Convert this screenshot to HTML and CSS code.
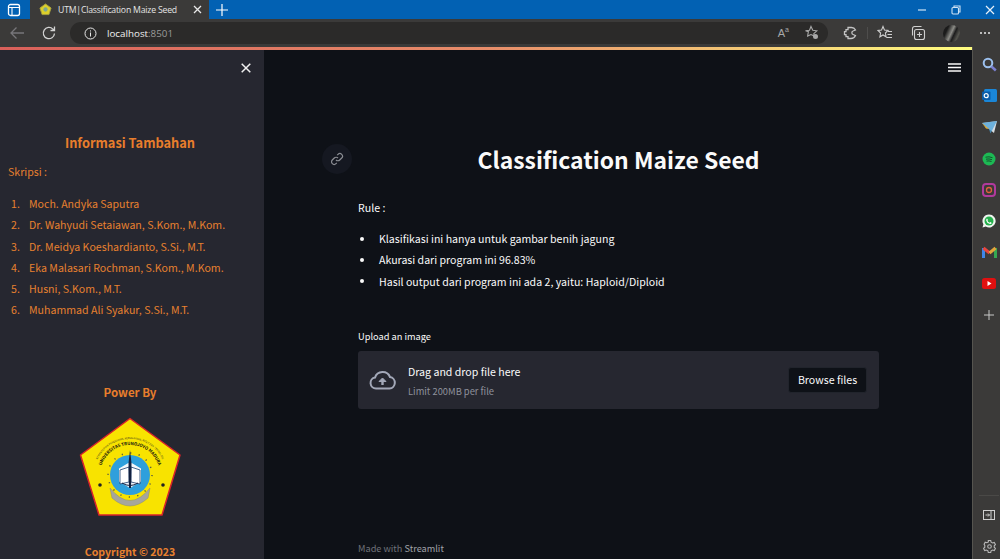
FILE: index.html
```html
<!DOCTYPE html>
<html lang="en">
<head>
  <meta charset="UTF-8" />
  <title>UTM|Classification Maize Seed</title>
  <link rel="stylesheet" href="styles.css">
</head>
<body>

<div class="titlebar">
  <div class="tab-actions">
    <svg width="14" height="14" viewBox="0 0 14 14" fill="none" stroke="#fff" stroke-width="1.3"><rect x="1.5" y="1.5" width="11" height="11" rx="2"/><path d="M1.5 4.5h11M5 4.5v8" stroke-width="1.1"/></svg>
  </div>
  <div class="tab">
    <svg class="tab-icon" width="13" height="13" viewBox="0 0 14 14"><path d="M7 1l6 4.4-2.3 7.1H3.3L1 5.4z" fill="#dcd02a" stroke="#a8a040"/><circle cx="7" cy="7" r="2.3" fill="#7fa890"/></svg>
    <span class="tab-title">UTM|Classification Maize Seed</span>
    <svg width="9" height="9" viewBox="0 0 9 9" stroke="#e8e8e8" stroke-width="1.3"><path d="M1 1l7 7M8 1L1 8"/></svg>
  </div>
  <svg class="new-tab" width="12" height="12" viewBox="0 0 12 12" stroke="#fff" stroke-width="1.2"><path d="M6 0v12M0 6h12"/></svg>
  <div class="window-btns">
    <svg width="10" height="10" viewBox="0 0 10 10" stroke="#cfe3f5" stroke-width="1.2"><path d="M1 5h8"/></svg>
    <svg width="10" height="10" viewBox="0 0 10 10" fill="none" stroke="#cfe3f5" stroke-width="1.1"><rect x="1" y="2.5" width="6.5" height="6.5" rx="1"/><path d="M3 2.5V1h6v6H7.5"/></svg>
    <svg width="10" height="10" viewBox="0 0 10 10" stroke="#e6f0fa" stroke-width="1.2"><path d="M1 1l8 8M9 1L1 9"/></svg>
  </div>
</div>

<div class="toolbar">
  <svg class="nav-icon" width="16" height="14" viewBox="0 0 16 14" fill="none" stroke="#77767a" stroke-width="1.3"><path d="M15 7H2M7.5 1.5L2 7l5.5 5.5"/></svg>
  <svg class="nav-icon" width="16" height="16" viewBox="0 0 16 16" fill="none" stroke="#d4d4d4" stroke-width="1.3"><path d="M13.5 8.5a5.6 5.6 0 1 1-1.6-4.4L13.5 5.5M13.5 1.5v4h-4"/></svg>
  <div class="address">
    <svg width="13" height="13" viewBox="0 0 13 13" fill="none" stroke="#e8e8e8" stroke-width="1"><circle cx="6.5" cy="6.5" r="5.5"/><path d="M6.5 5.5v4M6.5 3.4v1.1"/></svg>
    <span class="url">localhost<span class="url-port">:8501</span></span>
    <span class="address-end">
      <span class="read-aloud">A<sup>a</sup></span>
      <svg width="16" height="16" viewBox="0 0 16 16" fill="none" stroke="#a8a8a8" stroke-width="1.1"><path d="M7 1.5l1.800 3.800 4 .5-3 2.800.5 2.400-3.300-1.500L3.600 11l.8-4.400L1.500 5.800l4-.5z"/><circle cx="11.500" cy="11.500" r="2.500" fill="#a8a8a8" stroke="none"/></svg>
    </span>
  </div>
  <div class="toolbar-icons">
    <svg width="16" height="16" viewBox="0 0 16 16" fill="none" stroke="#c4c4c4" stroke-width="1.3"><path d="M6 2.500h3.500a4.500 4.500 0 0 1 4 2.500l-2.500 1c-1.500.5-1.500 3 0 3.500l2.500 1a5 5 0 0 1-4.500 3H6v-1.800H4v-2H2.500v-3H4v-2h2z"/></svg>
    <span class="toolbar-sep"></span>
    <svg width="16" height="16" viewBox="0 0 16 16" fill="none" stroke="#cfcfcf" stroke-width="1.100"><path d="M6 1.500l1.500 3.600 3.500.4-2.600 2.500.7 3.800L6 10l-3.100 1.800.7-3.800L1 5.500l3.500-.4zM11 6.500h4M10.500 9.500h4.500M9.500 12.500h5.500"/></svg>
    <svg width="16" height="16" viewBox="0 0 16 16" fill="none" stroke="#cfcfcf" stroke-width="1.100"><rect x="4.500" y="4.500" width="10" height="10" rx="2"/><path d="M9.500 7v5M7 9.500h5M2.500 10.500v-7a2 2 0 0 1 2-2h7"/></svg>
    <span class="avatar"></span>
    <span class="more">
      <span class="more-dot"></span><span class="more-dot"></span><span class="more-dot"></span>
    </span>
  </div>
</div>

<div class="page">
  <div class="app">
    <div class="decoration"></div>
    <div class="app-body">
      <aside class="sidebar">
        <div class="sidebar-close">
          <svg width="10" height="10" viewBox="0 0 10 10" stroke="#f0f0f0" stroke-width="1.500"><path d="M.7.7l8.600 8.600M9.300.7L.7 9.300"/></svg>
        </div>
        <h2 class="side-title">Informasi Tambahan</h2>
        <p class="side-text">Skripsi :</p>
        <ol class="side-list">
          <li>Moch. Andyka Saputra</li>
          <li>Dr. Wahyudi Setaiawan, S.Kom., M.Kom.</li>
          <li>Dr. Meidya Koeshardianto, S.Si., M.T.</li>
          <li>Eka Malasari Rochman, S.Kom., M.Kom.</li>
          <li>Husni, S.Kom., M.T.</li>
          <li>Muhammad Ali Syakur, S.Si., M.T.</li>
        </ol>
        <h3 class="side-sub">Power By</h3>
        <svg class="logo" width="102" height="102" viewBox="0 0 102 102">
          <defs>
            <path id="logo-arc-outer" d="M15 58a36 36 0 0 1 72 0"/>
            <path id="logo-arc-inner" d="M21 58a30 30 0 0 1 60 0"/>
          </defs>
          <path d="M51 1.500L101 38 83 98H20L1.500 38z" fill="#f8e300" stroke="#d8232a" stroke-width="1.500" stroke-linejoin="round"/>
          <text class="logo-small"><textPath href="#logo-arc-outer" startOffset="50%" text-anchor="middle">KEMENTERIAN PENDIDIKAN, KEBUDAYAAN, RISET DAN TEKNOLOGI</textPath></text>
          <text class="logo-name"><textPath href="#logo-arc-inner" startOffset="50%" text-anchor="middle">UNIVERSITAS TRUNOJOYO MADURA</textPath></text>
          <path d="M31 71q20 25 40 0l-2 10q-18 16-36 0z" fill="#a6a69c" stroke="#8c8c70" stroke-width=".5"/>
          <circle cx="51" cy="58" r="22" fill="none" stroke="#5c5c40" stroke-width="1.500" stroke-dasharray="1.200 7.400"/>
          <circle cx="51" cy="58" r="20" fill="#2f9fdc"/>
          <path d="M51 45l11 6.500v13L51 71l-11-6.500v-13z" fill="#f5f7fb"/>
          <path d="M41 53l9-3v15l-9 2zM61 53l-9-3v15l9 2z" fill="#fff" stroke="#1e3f6e" stroke-width=".8"/>
          <path d="M51 33l1.500 13-.5 25h-2l-.5-25z" fill="#122040"/>
          <path d="M43 66q8 5 16 0" fill="none" stroke="#122040" stroke-width="1"/>
          <circle cx="21" cy="68" r="1.800" fill="#222"/>
          <circle cx="84" cy="68" r="1.800" fill="#222"/>
        </svg>
        <p class="side-copy">Copyright © 2023</p>
      </aside>

      <main class="main">
        <div class="main-top">
          <svg width="13" height="9" viewBox="0 0 13 9" stroke="#fafafa" stroke-width="1.500"><path d="M0 1h13M0 4.500h13M0 8h13"/></svg>
        </div>
        <div class="block">
          <h1 class="title">
            <span class="title-link">
              <svg width="14" height="14" viewBox="0 0 14 14" fill="none" stroke="#8b8d93" stroke-width="1.200"><path d="M6 8a2.600 2.600 0 0 0 3.700 0l2-2A2.600 2.600 0 0 0 8 2.300l-.8.8M8 6a2.600 2.600 0 0 0-3.700 0l-2 2A2.600 2.600 0 0 0 6 11.700l.8-.8"/></svg>
            </span>
            Classification Maize Seed
          </h1>
          <p class="text">Rule :</p>
          <ul class="rule-list">
            <li>Klasifikasi ini hanya untuk gambar benih jagung</li>
            <li>Akurasi dari program ini 96.83%</li>
            <li>Hasil output dari program ini ada 2, yaitu: Haploid/Diploid</li>
          </ul>
          <label class="upload-label">Upload an image</label>
          <div class="dropzone">
            <svg class="cloud" width="27" height="20" viewBox="0 0 27 20" fill="none" stroke="#a3a8b8" stroke-width="2"><path d="M7 18.500a5.500 5.500 0 0 1-1-10.900A8 8 0 0 1 21 7a5.800 5.800 0 0 1-.5 11.500z"/><path d="M13.500 15V9.500" stroke-width="2.400"/><path d="M10 11.500l3.500-3.500 3.500 3.500z" fill="#a3a8b8" stroke-width="1"/></svg>
            <div class="drop-text">
              <span class="drop-main">Drag and drop file here</span>
              <small class="drop-limit">Limit 200MB per file</small>
            </div>
            <button class="browse-btn">Browse files</button>
          </div>
        </div>
        <footer class="footer">Made with <span class="footer-brand">Streamlit</span></footer>
      </main>
    </div>
  </div>

  <div class="rail">
    <div class="rail-apps">
      <svg width="15" height="15" viewBox="0 0 15 15" fill="none"><circle cx="6" cy="6" r="4.300" stroke="#9cc0ee" stroke-width="2"/><path d="M9.500 9.500l4.300 4" stroke="#7b7fd0" stroke-width="2.500"/></svg>
      <svg width="15" height="15" viewBox="0 0 15 15"><rect x="2" y="1" width="13" height="13" rx="1.500" fill="#1a86d8"/><rect x="0" y="3.500" width="8.500" height="8.500" rx="1" fill="#0a5ca8"/><circle cx="4.200" cy="7.700" r="2" fill="none" stroke="#fff" stroke-width="1.200"/></svg>
      <svg width="15" height="13" viewBox="0 0 15 13"><path d="M0 2l15-2-3 12-5-4z" fill="#d8dde2"/><path d="M0 2l7 6 1.500 4.500L15 0z" fill="#4aa0d8" opacity=".75"/><path d="M0 2l7 6-3-.5z" fill="#e2b23c"/></svg>
      <svg width="14" height="14" viewBox="0 0 14 14" fill="none"><circle cx="7" cy="7" r="6.500" fill="#1db954"/><path d="M3.500 5.200q3.500-1 7 .5M4 7.200q3-.8 6 .5M4.500 9.100q2.500-.6 5 .4" stroke="#14532d" stroke-width="1"/></svg>
      <svg width="14" height="14" viewBox="0 0 14 14" fill="none"><rect x="1" y="1" width="12" height="12" rx="3" stroke="#b13a9c" stroke-width="2"/><circle cx="7" cy="7" r="2.500" stroke="#e0603c" stroke-width="1.300"/></svg>
      <svg width="14" height="14" viewBox="0 0 14 14"><path d="M7 .500a6.500 6.500 0 0 0-5.600 9.800L.500 13.500l3.300-.9A6.500 6.500 0 1 0 7 .500z" fill="#f0f4f0"/><circle cx="7" cy="7" r="4.500" fill="#25b04c"/><path d="M5 4.500l1 1.500-.6.800q.8 1.400 2.200 2l.8-.7 1.400 1q-.8 1.300-2.400.7-2.600-1-3.200-3.400 0-1.400.8-1.900z" fill="#fff"/></svg>
      <svg width="15" height="12" viewBox="0 0 15 12" fill="none"><path d="M1.500 12V2" stroke="#3f86e8" stroke-width="3"/><path d="M13.500 12V2" stroke="#36a852" stroke-width="3"/><path d="M1.500 2l6 5" stroke="#e8453c" stroke-width="3"/><path d="M13.500 2l-6 5" stroke="#e2a53a" stroke-width="3"/></svg>
      <svg width="14" height="11" viewBox="0 0 14 11"><rect width="14" height="11" rx="2.500" fill="#e01010"/><path d="M5.500 3l4 2.500-4 2.500z" fill="#fff"/></svg>
      <svg width="10" height="10" viewBox="0 0 10 10" stroke="#c8c8c8" stroke-width="1"><path d="M5 0v10M0 5h10"/></svg>
    </div>
    <div class="rail-bottom">
      <span class="rail-sep"></span>
      <svg width="12" height="10" viewBox="0 0 12 10" fill="none" stroke="#cfcfcf"><rect x=".5" y=".5" width="11" height="9"/><path d="M8 .5v9M2.500 5h4M5 3.500L6.500 5 5 6.500"/></svg>
      <svg width="13" height="13" viewBox="0 0 13 13" fill="none" stroke="#b8b8b8" stroke-width="1.100"><path d="M5.300 1h2.400l.4 1.700 1.500.8 1.700-.5 1.100 2-1.200 1.300v1.400l1.200 1.300-1.100 2-1.700-.5-1.500.8-.4 1.700H5.300l-.4-1.700-1.500-.8-1.700.5-1.100-2 1.200-1.300V6L1.100 4.700l1.100-2 1.700.5 1.500-.8z" transform="translate(0 -.5)"/><circle cx="6.500" cy="6.500" r="1.800"/></svg>
    </div>
  </div>
</div>

</body>
</html>
```

FILE: styles.css
```css
* {
  box-sizing: border-box;
}
html, body {
  height: 100%;
}
body {
  margin: 0;
  background-color: #3b3a39;
  color: #fafafa;
  font-family: "Noto Sans CJK SC", "Noto Sans", sans-serif;
  display: flex;
  flex-direction: column;
  overflow: hidden;
}

/* browser chrome */
.titlebar {
  height: 19px;
  background-color: #0261b3;
  display: flex;
  align-items: stretch;
  flex-shrink: 0;
}
.tab-actions {
  width: 30px;
  display: flex;
  align-items: center;
  justify-content: center;
  padding-right: 3px;
}
.tab {
  width: 179px;
  background-color: #3b3a39;
  display: flex;
  align-items: center;
  padding: 0 7px 0 9px;
}
.tab-icon {
  flex-shrink: 0;
}
.tab-title {
  flex: 1;
  margin-left: 6px;
  font-family: "Open Sans", sans-serif;
  font-size: 8.700px;
  letter-spacing: -.2px;
  color: #e4e4e4;
  white-space: nowrap;
}
.new-tab {
  align-self: center;
  margin-left: 7px;
}
.window-btns {
  margin-left: auto;
  display: flex;
  align-items: center;
  padding-right: 5px;
  gap: 24px;
}
.toolbar {
  height: 28px;
  display: flex;
  align-items: center;
  flex-shrink: 0;
  padding-left: 9px;
}
.nav-icon {
  margin-right: 16px;
  flex-shrink: 0;
}
.nav-icon + .nav-icon {
  margin-right: 13px;
}
.address {
  width: 758px;
  height: 22px;
  background-color: #2b2a29;
  border-radius: 11px;
  display: flex;
  align-items: center;
  padding: 0 8px 0 14px;
}
.url {
  margin-left: 10px;
  font-family: "Open Sans", sans-serif;
  font-size: 9.800px;
  color: #f0f0f0;
}
.url-port {
  color: #9a9a9a;
}
.address-end {
  margin-left: auto;
  display: flex;
  align-items: center;
  gap: 15px;
}
.read-aloud {
  font-family: "Liberation Sans", sans-serif;
  font-size: 11px;
  color: #a8a8a8;
}
.read-aloud sup {
  font-size: 7px;
  line-height: 0;
}
.toolbar-icons {
  display: flex;
  align-items: center;
  margin-left: 14px;
  gap: 17px;
}
.toolbar-sep {
  width: 1px;
  height: 12px;
  margin: 0 -8px;
  background-color: #4e4d4c;
}
.avatar {
  width: 17px;
  height: 17px;
  border-radius: 50%;
  background: linear-gradient(115deg, #1b1b1b 25%, #8d8d88 48%, #1c1c1c 62%, #55554f 80%, #151515);
}
.more {
  display: flex;
  gap: 2px;
  margin-left: 3px;
}
.more-dot {
  width: 2px;
  height: 2px;
  background-color: #e8e8e8;
  border-radius: 50%;
}

/* streamlit app */
.page {
  flex: 1;
  min-height: 0;
  display: flex;
}
.app {
  flex: 1;
  min-width: 0;
  display: flex;
  flex-direction: column;
}
.decoration {
  height: 3px;
  flex-shrink: 0;
  background-image: linear-gradient(90deg, #d9605a, #e88d6a 50%, #fffd80);
}
.app-body {
  flex: 1;
  min-height: 0;
  display: flex;
}
.sidebar {
  width: 264px;
  flex-shrink: 0;
  background-color: #262730;
  color: #e8812f;
  display: flex;
  flex-direction: column;
  padding: 0 12px 0 8px;
  font-size: 10.600px;
  overflow: hidden;
}
.sidebar > * {
  flex-shrink: 0;
}
.sidebar-close {
  height: 37px;
  display: flex;
  justify-content: flex-end;
  padding: 13px 1px 0 0;
}
.side-title {
  margin: 46px 0 0;
  font-size: 12.800px;
  font-weight: 600;
  line-height: 20px;
  text-align: center;
  color: #e87e2c;
}
.side-text {
  margin: 9px 0 0;
  line-height: 20px;
}
.side-list {
  margin: 11px 0 0;
  padding: 0;
  list-style: none;
  counter-reset: side;
}
.side-list li {
  counter-increment: side;
  display: flex;
  line-height: 21.300px;
}
.side-list li::before {
  content: counter(side) ".";
  width: 18px;
  padding-left: 3px;
  flex-shrink: 0;
}
.side-sub {
  margin: 61px 0 0;
  font-size: 11.500px;
  font-weight: 600;
  line-height: 20px;
  text-align: center;
  color: #e87e2c;
}
.logo {
  display: block;
  margin: 15px auto 0;
}
.logo-small {
  font-size: 2.600px;
  fill: #3a3a20;
}
.logo-name {
  font-size: 4.300px;
  font-weight: 700;
  fill: #111;
}
.side-copy {
  margin: 25px 0 0;
  font-weight: 600;
  font-size: 10.600px;
  line-height: 16px;
  text-align: center;
}
.main {
  flex: 1;
  min-width: 0;
  background-color: #0e1117;
  display: flex;
  flex-direction: column;
  padding: 0 93px 0 94px;
}
.main-top {
  height: 47px;
  margin-right: -82px;
  display: flex;
  justify-content: flex-end;
  align-items: flex-start;
  padding-top: 13px;
}
.title {
  position: relative;
  margin: 44px 0 0;
  font-size: 22.900px;
  font-weight: 700;
  line-height: 36px;
  text-align: center;
  color: #fafafa;
}
.title-link {
  position: absolute;
  left: -36px;
  top: 3px;
  width: 30px;
  height: 30px;
  border-radius: 50%;
  background-color: #151821;
  display: flex;
  align-items: center;
  justify-content: center;
}
.text {
  margin: 21px 0 0;
  font-size: 10.600px;
  line-height: 20px;
}
.rule-list {
  margin: 10px 0 0;
  padding: 0;
  list-style: none;
  font-size: 10.600px;
}
.rule-list li {
  display: flex;
  align-items: center;
  line-height: 21.300px;
}
.rule-list li::before {
  content: "";
  width: 4px;
  height: 4px;
  margin: 0 15px 0 2px;
  border-radius: 50%;
  background-color: #fafafa;
  flex-shrink: 0;
}
.upload-label {
  display: block;
  margin-top: 36px;
  font-size: 9.250px;
  line-height: 16px;
}
.dropzone {
  margin-top: 7px;
  height: 58px;
  background-color: #262730;
  border-radius: 3px;
  display: flex;
  align-items: center;
  padding: 0 12px 0 11px;
}
.cloud {
  flex-shrink: 0;
}
.drop-text {
  margin-left: 12px;
  display: flex;
  flex-direction: column;
  gap: 3px;
  padding-top: 2px;
}
.drop-main {
  font-size: 10.600px;
  line-height: 18px;
}
.drop-limit {
  font-size: 9.350px;
  line-height: 15px;
  color: #8f929c;
}
.browse-btn {
  margin-left: auto;
  width: 79px;
  height: 26px;
  padding: 0;
  background-color: #0e1117;
  color: #fafafa;
  border: 1px solid #21242c;
  border-radius: 3px;
  font-family: inherit;
  font-size: 10.600px;
}
.footer {
  margin-top: auto;
  padding-bottom: 3px;
  font-size: 9.200px;
  line-height: 16px;
  color: #6f7279;
}
.footer-brand {
  color: #a0a2a8;
}

/* edge sidebar */
.rail {
  width: 28px;
  flex-shrink: 0;
  display: flex;
  flex-direction: column;
  padding: 2px 0 0 5px;
  border-left: 1px solid #55544f;
}
.rail-apps {
  display: grid;
  grid-auto-rows: 31.300px;
  place-items: center;
}
.rail-bottom {
  margin-top: auto;
  display: flex;
  flex-direction: column;
  align-items: center;
  gap: 20px;
  padding-bottom: 6px;
}
.rail-sep {
  width: 20px;
  height: 1px;
  margin-bottom: -6px;
  background-color: #4a4947;
}
```
